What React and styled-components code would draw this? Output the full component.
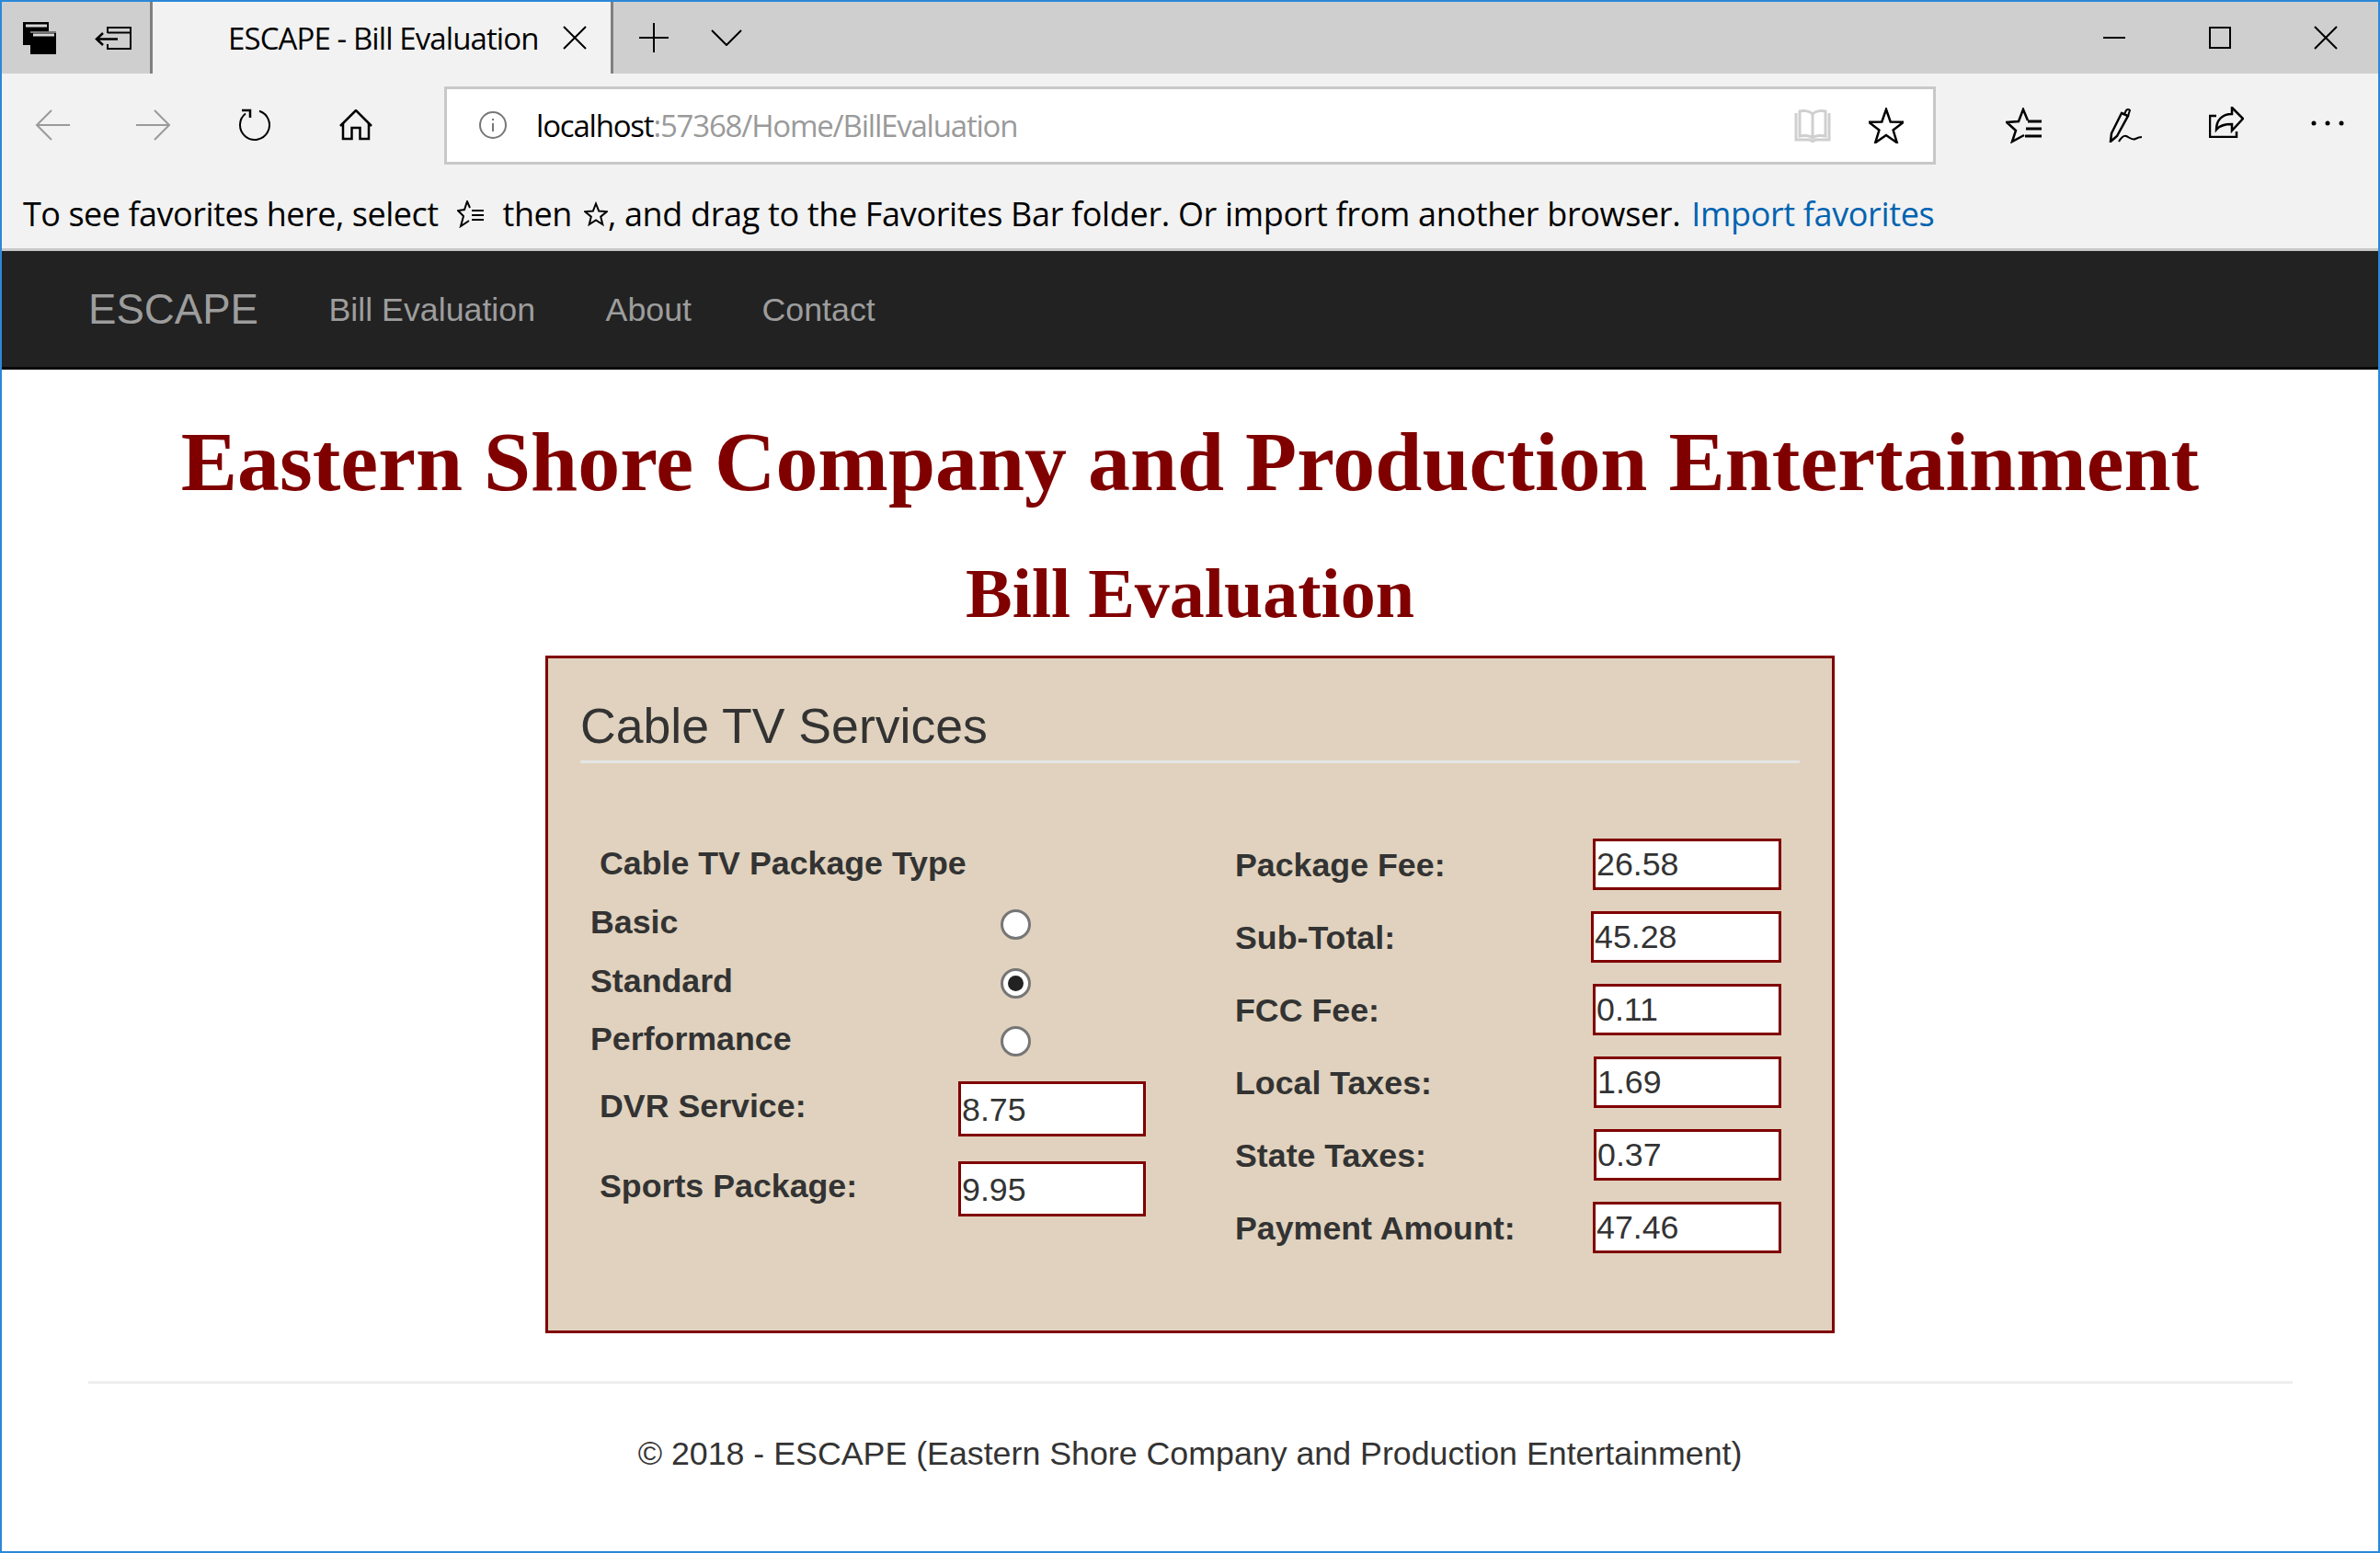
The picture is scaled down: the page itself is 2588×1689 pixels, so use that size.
import React from 'react'
import styled, { createGlobalStyle } from 'styled-components'

const GlobalStyle = createGlobalStyle`
    html, body {
        margin: 0;
        padding: 0;
        background: #fff;
    }
    * {
        box-sizing: border-box;
    }
`

const starPoints = (cx, cy, R, r) => {
    const pts = []
    for (let i = 0; i < 10; i++) {
        const rad = i % 2 === 0 ? R : r
        const a = (Math.PI / 5) * i - Math.PI / 2
        pts.push(`${(cx + rad * Math.cos(a)).toFixed(1)},${(cy + rad * Math.sin(a)).toFixed(1)}`)
    }
    return pts.join(' ')
}

const Line = ({ w, h, color = '#000', sw = 2, children }) => (
    <svg width={w} height={h} viewBox={`0 0 ${w} ${h}`} fill="none" stroke={color} strokeWidth={sw}>
        {children}
    </svg>
)

function App() {
    const leftInputs = [
        { label: 'DVR Service:', value: '8.75' },
        { label: 'Sports Package:', value: '9.95' },
    ]
    const rightInputs = [
        { label: 'Package Fee:', value: '26.58', w: 205 },
        { label: 'Sub-Total:', value: '45.28', w: 207 },
        { label: 'FCC Fee:', value: '0.11', w: 205 },
        { label: 'Local Taxes:', value: '1.69', w: 204 },
        { label: 'State Taxes:', value: '0.37', w: 204 },
        { label: 'Payment Amount:', value: '47.46', w: 205 },
    ]
    const packages = [
        { label: 'Basic', checked: false },
        { label: 'Standard', checked: true },
        { label: 'Performance', checked: false },
    ]

    return (
        <Window>
            <GlobalStyle />

            <TabBar>
                <TabTools>
                    <Line w={36} h={35} sw={0}>
                        <rect x="0" y="0" width="28" height="25" fill="#000" />
                        <rect x="3" y="2.5" width="23" height="3" fill="#d8d8d8" />
                        <rect x="8" y="10" width="28" height="25" fill="#000" />
                        <rect x="8" y="10" width="28" height="2" fill="#777" />
                        <rect x="11" y="12.5" width="23" height="3" fill="#d8d8d8" />
                    </Line>
                    <Line w={40} h={25}>
                        <path d="M14 7V1h25v23H14v-5" />
                        <path d="M14 6.5h25" />
                        <path d="M25 13.5H2 M9 7l-7 6.5L9 20" strokeWidth="2.5" />
                    </Line>
                </TabTools>
                <Tab>
                    <TabTitle>ESCAPE - Bill Evaluation</TabTitle>
                    <Line w={26} h={26}>
                        <path d="M1 1l24 24 M25 1L1 25" />
                    </Line>
                </Tab>
                <NewTab>
                    <Line w={34} h={34}>
                        <path d="M17 1v32 M1 17h32" />
                    </Line>
                    <Line w={34} h={18}>
                        <path d="M1 1l16 16L33 1" />
                    </Line>
                </NewTab>
                <Spacer />
                <WindowButton>
                    <Line w={24} h={4}>
                        <path d="M0 2h24" />
                    </Line>
                </WindowButton>
                <WindowButton>
                    <Line w={24} h={24}>
                        <path d="M1 1h22v22H1z" />
                    </Line>
                </WindowButton>
                <WindowButton>
                    <Line w={26} h={26}>
                        <path d="M1 1l24 24 M25 1L1 25" />
                    </Line>
                </WindowButton>
            </TabBar>

            <Toolbar>
                <ToolButton>
                    <Line w={38} h={34} color="#9a9a9a">
                        <path d="M38 17H2 M18 1L2 17l16 16" />
                    </Line>
                </ToolButton>
                <ToolButton>
                    <Line w={38} h={34} color="#9a9a9a">
                        <path d="M0 17h36 M20 1l16 16-16 16" />
                    </Line>
                </ToolButton>
                <ToolButton>
                    <Line w={36} h={36}>
                        <path d="M23 2.8A16 16 0 1 1 8 5.5" />
                        <path d="M4 2h9v8" strokeWidth="2.5" />
                    </Line>
                </ToolButton>
                <ToolButton>
                    <Line w={36} h={34} sw={2.5}>
                        <path d="M1 18L18 1l17 17" />
                        <path d="M4 15v17h9.5V20h9v12H32V15" />
                    </Line>
                </ToolButton>

                <AddressBar>
                    <Line w={30} h={30} color="#777">
                        <circle cx="15" cy="15" r="14" />
                        <path d="M15 13v9 M15 8v2" />
                    </Line>
                    <Url>
                        localhost<UrlRest>:57368/Home/BillEvaluation</UrlRest>
                    </Url>
                    <Spacer />
                    <BookSlot>
                        <Line w={40} h={37} color="#cfcfcf" sw={3}>
                            <path d="M20 6C16 2 9 2 6 3v27c4-1 11-1 14 2 3-3 10-3 14-2V3c-3-1-10-1-14 3zM20 6v26" />
                            <path d="M2 5v29h15l3 2 3-2h15V5" />
                        </Line>
                    </BookSlot>
                    <Line w={38} h={39} sw={2.5}>
                        <polygon points={starPoints(19, 22, 20, 8)} />
                    </Line>
                </AddressBar>

                <Spacer />
                <ToolButton>
                    <Line w={40} h={39} sw={2.5}>
                        <path d="M24 14L19 2l-5 13-13 1 10 9-4 12 13-7" />
                        <path d="M24 15h15 M22 23h17 M21 31h18" strokeWidth="3" />
                    </Line>
                </ToolButton>
                <ToolButton>
                    <Line w={36} h={38}>
                        <path d="M14 6l7 3L9 31l-7 6 1-9z" strokeWidth="2.5" />
                        <path d="M17 7l2-4q2-2 4 0l-2 6" />
                        <path d="M11 37c3-5 5-7 8-6s6 5 10 3 5-2 7-2" />
                    </Line>
                </ToolButton>
                <ToolButton $lift={6}>
                    <Line w={38} h={34} sw={2.5}>
                        <path d="M8 10H1v23h29v-6" />
                        <path d="M25 1l12 12-12 13v-7c-8 0-13 1-17 6 0-10 6-17 17-17z" />
                    </Line>
                </ToolButton>
                <ToolButton $lift={4}>
                    <Line w={36} h={6} sw={0}>
                        <circle cx="3" cy="3" r="2.5" fill="#000" />
                        <circle cx="18" cy="3" r="2.5" fill="#000" />
                        <circle cx="33" cy="3" r="2.5" fill="#000" />
                    </Line>
                </ToolButton>
            </Toolbar>

            <FavoritesBar>
                <span>To see favorites here, select</span>
                <ListGlyph>
                    <Line w={30} h={30}>
                        <path d="M14 8l-3-7-3 9-7 1 6 6-3 11 9-6" />
                        <path d="M16 11h13 M16 16h13 M16 21h13" />
                    </Line>
                </ListGlyph>
                <span>then</span>
                <StarGlyph>
                    <Line w={26} h={28}>
                        <polygon points={starPoints(13, 15, 12.5, 5.5)} />
                    </Line>
                </StarGlyph>
                <TailText>, and drag to the Favorites Bar folder. Or import from another browser.</TailText>
                <ImportLink>Import favorites</ImportLink>
            </FavoritesBar>

            <NavBar>
                <Brand>ESCAPE</Brand>
                <NavLink>Bill Evaluation</NavLink>
                <NavLink>About</NavLink>
                <NavLink>Contact</NavLink>
            </NavBar>

            <Main>
                <Heading>Eastern Shore Company and Production Entertainment</Heading>
                <SubHeading>Bill Evaluation</SubHeading>

                <Panel>
                    <PanelTitle>Cable TV Services</PanelTitle>
                    <PanelBody>
                        <LeftColumn>
                            <GroupLabel>Cable TV Package Type</GroupLabel>
                            <RadioGroup>
                                {packages.map((p) => (
                                    <RadioRow key={p.label}>
                                        <Label>{p.label}</Label>
                                        <Radio type="radio" name="package" defaultChecked={p.checked} />
                                    </RadioRow>
                                ))}
                            </RadioGroup>
                            {leftInputs.map((f) => (
                                <ServiceRow key={f.label}>
                                    <ServiceLabel>{f.label}</ServiceLabel>
                                    <ServiceInput readOnly value={f.value} />
                                </ServiceRow>
                            ))}
                        </LeftColumn>

                        <RightColumn>
                            {rightInputs.map((f) => (
                                <ResultRow key={f.label}>
                                    <ResultLabel>{f.label}</ResultLabel>
                                    <ResultInput readOnly value={f.value} $w={f.w} />
                                </ResultRow>
                            ))}
                        </RightColumn>
                    </PanelBody>
                </Panel>

                <FooterRule />
                <Footer>© 2018 - ESCAPE (Eastern Shore Company and Production Entertainment)</Footer>
            </Main>
        </Window>
    )
}

export default App

const chromeFont = `"Open Sans", "Liberation Sans", sans-serif`
const pageFont = `"Liberation Sans", Arial, sans-serif`

const Window = styled.div`
    width: 2588px;
    height: 1689px;
    border: 2px solid #2b88d8;
    overflow: hidden;
    background: #fff;
    display: flex;
    flex-direction: column;
    color: #333;
    font-family: ${pageFont};
`

const TabBar = styled.div`
    height: 78px;
    flex: none;
    background: #cfcfcf;
    display: flex;
    align-items: center;
`

const TabTools = styled.div`
    width: 161px;
    height: 100%;
    display: flex;
    align-items: center;
    gap: 42px;
    padding-left: 23px;
`

const Tab = styled.div`
    width: 504px;
    height: 100%;
    background: #f2f2f2;
    border-left: 3px solid #808080;
    border-right: 3px solid #808080;
    display: flex;
    align-items: center;
    justify-content: space-between;
    padding: 0 26px 0 82px;
`

const TabTitle = styled.span`
    font-family: ${chromeFont};
    font-size: 33px;
    letter-spacing: -0.9px;
    color: #000;
    white-space: nowrap;
`

const NewTab = styled.div`
    display: flex;
    align-items: center;
    gap: 45px;
    padding-left: 27px;
`

const Spacer = styled.div`
    flex: 1;
`

const WindowButton = styled.div`
    width: 115px;
    display: flex;
    justify-content: center;
`

const Toolbar = styled.div`
    height: 112px;
    flex: none;
    background: #f2f2f2;
    display: flex;
    align-items: center;
`

const ToolButton = styled.div`
    width: 110px;
    height: 40px;
    padding-bottom: ${(p) => p.$lift || 0}px;
    display: flex;
    align-items: center;
    justify-content: center;
`

const AddressBar = styled.div`
    width: 1622px;
    height: 85px;
    margin-left: 41px;
    border: 3px solid #c8c8c8;
    background: #fff;
    display: flex;
    align-items: center;
    padding: 0 32px 0 35px;
`

const Url = styled.span`
    margin-left: 32px;
    font-family: ${chromeFont};
    font-size: 33px;
    letter-spacing: -1.2px;
    color: #000;
`

const UrlRest = styled.span`
    color: #9a9a9a;
`

const BookSlot = styled.div`
    margin-right: 41px;
    display: flex;
`

const FavoritesBar = styled.div`
    height: 81px;
    flex: none;
    padding: 3px 0 0 23px;
    background: #f2f2f2;
    border-bottom: 3px solid #c8c8c8;
    display: flex;
    align-items: center;
    font-family: ${chromeFont};
    font-size: 36px;
    letter-spacing: -0.48px;
    color: #000;
    white-space: pre;
`

const ListGlyph = styled.span`
    display: inline-flex;
    margin: 0 20px;
`

const StarGlyph = styled.span`
    display: inline-flex;
    margin-left: 13px;
`

const TailText = styled.span`
    letter-spacing: -0.34px;
`

const ImportLink = styled.span`
    margin-left: 12px;
    letter-spacing: -0.36px;
    color: #0063b1;
`

const NavBar = styled.nav`
    height: 129px;
    flex: none;
    background: #222;
    border-bottom: 3px solid #080808;
    display: flex;
    align-items: center;
    padding: 2px 0 0 94px;
    gap: 76.5px;
`

const Brand = styled.span`
    font-size: 45.6px;
    color: #9d9d9d;
`

const NavLink = styled.span`
    font-size: 35.75px;
    color: #9d9d9d;
`

const Main = styled.main`
    display: flex;
    flex-direction: column;
    align-items: center;
`

const Heading = styled.h1`
    margin: 50px 0 0;
    font-family: "Liberation Serif", "Times New Roman", serif;
    font-weight: bold;
    font-size: 91.9px;
    line-height: 100px;
    color: #800000;
    white-space: nowrap;
`

const SubHeading = styled.h2`
    margin: 51px 0 0;
    font-family: "Liberation Serif", "Times New Roman", serif;
    font-weight: bold;
    font-size: 76px;
    line-height: 84px;
    color: #800000;
`

const Panel = styled.section`
    width: 1402px;
    height: 737px;
    margin-top: 26px;
    border: 3px solid #800000;
    background: #e0d2be;
    padding: 0 35px;
`

const PanelTitle = styled.div`
    height: 114px;
    padding-top: 41px;
    border-bottom: 3px solid #e5e5e5;
    font-size: 53.6px;
    line-height: 64px;
`

const PanelBody = styled.div`
    display: flex;
    padding-left: 11px;
`

const LeftColumn = styled.div`
    width: 701px;
    padding-top: 85px;
    display: flex;
    flex-direction: column;
`

const RightColumn = styled.div`
    width: 594px;
    padding-top: 82px;
    display: flex;
    flex-direction: column;
    gap: 23px;
`

const Label = styled.span`
    padding-top: 2px;
    font-size: 35.75px;
    font-weight: bold;
    line-height: 44px;
    white-space: nowrap;
`

const GroupLabel = styled(Label)`
    padding-left: 10px;
    margin-bottom: 18px;
`

const RadioGroup = styled.div`
    display: flex;
    flex-direction: column;
    gap: 19.5px;
    margin-bottom: 12.5px;
`

const RadioRow = styled.div`
    height: 44px;
    display: grid;
    grid-template-columns: 446px 33px;
    align-items: start;
`

const Radio = styled.input`
    appearance: none;
    width: 33px;
    height: 33px;
    margin: 10px 0 0;
    border-radius: 50%;
    border: 3px solid #767676;
    background: #fff;
    display: grid;
    place-items: center;

    &:checked::after {
        content: "";
        width: 17px;
        height: 17px;
        border-radius: 50%;
        background: #222;
    }
`

const ServiceRow = styled.div`
    height: 87px;
    padding-left: 10px;
    display: grid;
    grid-template-columns: 390px 204px;
    align-items: center;
`

const ServiceLabel = styled(Label)`
    padding-bottom: 9px;
`

const ValueInput = styled.input`
    border: 3px solid #800000;
    background: #fff;
    color: #333;
    font-family: ${pageFont};
    font-size: 35.75px;
    outline: none;
    margin: 0;
`

const ServiceInput = styled(ValueInput)`
    width: 204px;
    height: 60px;
    padding: 2px 1px 0;
`

const ResultRow = styled.div`
    height: 56px;
    display: flex;
    align-items: center;
    justify-content: space-between;
`

const ResultLabel = styled(Label)`
    padding-bottom: 1px;
`

const ResultInput = styled(ValueInput)`
    width: ${(p) => p.$w}px;
    height: 56px;
    padding: 0 1px;
`

const FooterRule = styled.div`
    width: 2397px;
    height: 3px;
    margin-top: 52px;
    background: #eee;
`

const Footer = styled.footer`
    margin-top: 54px;
    font-size: 35.75px;
    line-height: 44px;
`
